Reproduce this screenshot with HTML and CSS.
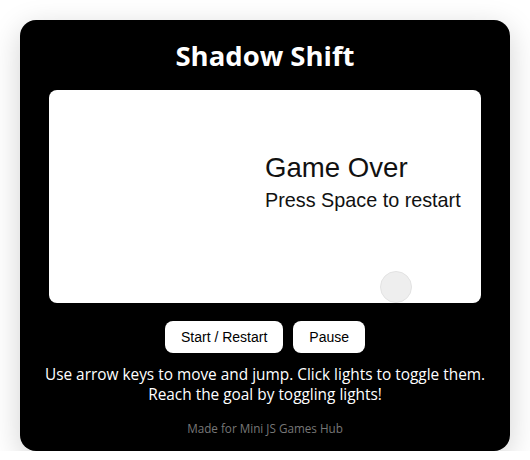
FILE: index.html
```html
<!DOCTYPE html>
<html>
<head>
<meta charset="utf-8">
<title>Shadow Shift</title>
<link rel="stylesheet" href="styles.css">
</head>
<body>
<main class="card">
  <h1 class="title">Shadow Shift</h1>
  <div class="stage">
    <svg class="scene" width="432" height="213" viewBox="0 0 432 213">
      <text x="216" y="87" class="over">Game Over</text>
      <text x="216" y="117" class="hint">Press Space to restart</text>
      <circle cx="347" cy="197" r="15.5" fill="#eeeeee" stroke="#e2e2e2" stroke-width="1"/>
    </svg>
  </div>
  <div class="controls">
    <button class="btn">Start / Restart</button>
    <button class="btn">Pause</button>
  </div>
  <p class="instructions">Use arrow keys to move and jump. Click lights to toggle them.<br>Reach the goal by toggling lights!</p>
  <footer class="credit">Made for Mini JS Games Hub</footer>
</main>
</body>
</html>
```
FILE: styles.css
```css
html, body {
  margin: 0;
  padding: 0;
  background: #ffffff;
}
body {
  padding: 20px 20px 0;
  font-family: "Open Sans", "Noto Sans", sans-serif;
}
.card {
  width: 490px;
  box-sizing: border-box;
  background: #000;
  color: #fff;
  border-radius: 16px;
  padding: 19px 16px 15px;
  box-shadow: 0 8px 30px rgba(0, 0, 0, 0.18);
  display: flex;
  flex-direction: column;
  align-items: center;
}
.title {
  margin: 0 0 17px;
  font-size: 27.5px;
  line-height: 34px;
  font-weight: 700;
}
.stage {
  width: 432px;
  height: 213px;
  background: #fff;
  border-radius: 8px;
  overflow: hidden;
}
.scene {
  display: block;
}
.over {
  font-family: "Liberation Sans", Arial, sans-serif;
  font-size: 27.6px;
  fill: #111;
}
.hint {
  font-family: "Liberation Sans", Arial, sans-serif;
  font-size: 19.8px;
  fill: #111;
}
.controls {
  display: flex;
  gap: 10px;
  margin-top: 18px;
}
.btn {
  font-family: "Liberation Sans", Arial, sans-serif;
  font-size: 14px;
  line-height: 16px;
  padding: 8px 16px;
  border: none;
  border-radius: 8px;
  background: #fff;
  color: #000;
}
.instructions {
  margin: 12px 0 0;
  font-size: 15.4px;
  line-height: 20px;
  text-align: center;
  white-space: nowrap;
}
.credit {
  margin-top: 15px;
  font-size: 11.7px;
  line-height: 16px;
  color: #777;
}
```
